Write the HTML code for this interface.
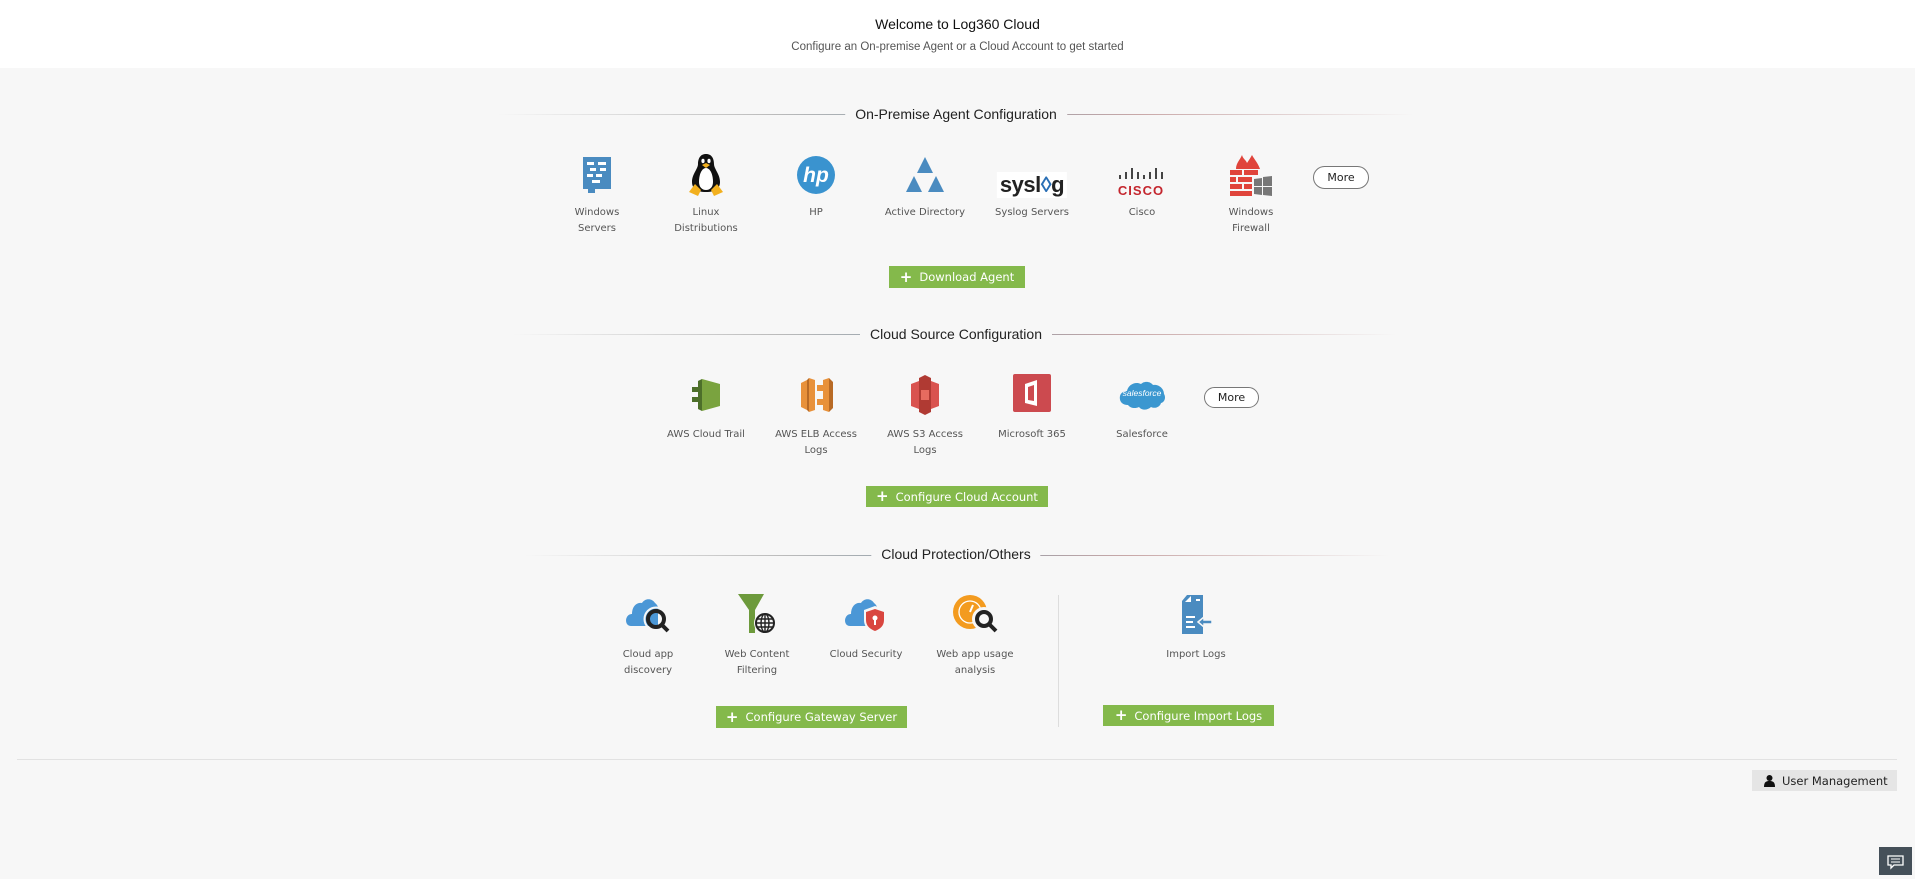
<!DOCTYPE html>
<html><head><meta charset="utf-8"><style>
*{margin:0;padding:0;box-sizing:border-box}
body{width:1915px;height:875px;background:#f7f7f7;position:relative;overflow:hidden;font-family:"DejaVu Sans","Liberation Sans",sans-serif;color:#444}
.hdr{position:absolute;left:0;top:0;width:1915px;height:68px;background:#fff}
.t{position:absolute;left:0;width:1915px;text-align:center;font-family:"Liberation Sans",sans-serif}
.sec{position:absolute;height:1px;background:linear-gradient(90deg,rgba(200,200,200,0),#bbb 30%,#8a9aa6 50%,#c9a8a8 70%,rgba(200,200,200,0))}
.st{position:absolute;font-family:"Liberation Sans",sans-serif;font-size:14px;color:#222;background:#f7f7f7;padding:0 10px;transform:translateX(-50%);white-space:nowrap}
.it{position:absolute;width:120px;margin-left:-60px;text-align:center}
.ic{position:absolute;left:50%;transform:translate(-50%,-50%)}
.lb{position:absolute;left:0;width:120px;font-size:10px;line-height:16px;color:#555;text-align:center}
.btn{position:absolute;background:#84b94b;color:#fff;font-size:11.5px;display:flex;align-items:center;justify-content:center;gap:7px}
.btn b{font-size:15px;font-weight:bold;line-height:1}
.more{position:absolute;border:1.5px solid #777;border-radius:12px;font-size:11px;color:#222;display:flex;align-items:center;justify-content:center;background:#fff}
</style></head><body>
<div class="hdr"></div>
<div class="t" style="top:16px;font-size:14px;color:#111">Welcome to Log360 Cloud</div>
<div class="t" style="top:41px;font-size:11.5px;color:#555">Configure an On-premise Agent or a Cloud Account to get started</div>

<!-- section 1 -->
<div class="sec" style="left:498px;width:916px;top:114px"></div>
<div class="st" style="left:956px;top:106px">On-Premise Agent Configuration</div>

<div class="it" style="left:597px;top:175px">
<svg class="ic" width="34" height="40" viewBox="0 0 34 40"><path d="M3 2h28v32H15v4H8v-4H3z" fill="#4a8bc0"/><g fill="#fff"><rect x="7" y="7" width="7" height="3"/><rect x="18" y="7" width="8" height="3"/><rect x="10" y="13" width="6" height="3"/><rect x="20" y="13" width="6" height="3"/><rect x="7" y="19" width="6" height="3"/><rect x="16" y="19" width="6" height="3"/><rect x="12" y="25" width="8" height="3"/></g></svg>
<div class="lb" style="top:30px">Windows<br>Servers</div></div>

<div class="it" style="left:706px;top:175px">
<svg class="ic" width="38" height="46" viewBox="0 0 38 46"><path d="M19 2c-6 0-8 5-8 10 0 5-6 10-6 18 0 6 4 10 14 10s14-4 14-10c0-8-6-13-6-18 0-5-2-10-8-10z" fill="#111"/><path d="M19 16c-4 0-7 6-7 14 0 5 3 8 7 8s7-3 7-8c0-8-3-14-7-14z" fill="#fff"/><ellipse cx="16" cy="9" rx="1.6" ry="2.2" fill="#fff"/><ellipse cx="22" cy="9" rx="1.6" ry="2.2" fill="#fff"/><path d="M15 13l4-2 4 2-4 3z" fill="#f2b01e"/><path d="M2 40l6-8 6 6-3 6z M36 40l-6-8-6 6 3 6z" fill="#f2b01e"/></svg>
<div class="lb" style="top:30px">Linux<br>Distributions</div></div>

<div class="it" style="left:816px;top:175px">
<svg class="ic" width="40" height="40" viewBox="0 0 40 40"><circle cx="20" cy="20" r="19" fill="#3a93cf"/><text x="20" y="27" text-anchor="middle" font-family="Liberation Sans" font-style="italic" font-weight="bold" font-size="21" fill="#fff">hp</text></svg>
<div class="lb" style="top:30px">HP</div></div>

<div class="it" style="left:925px;top:175px">
<svg class="ic" width="42" height="38" viewBox="0 0 42 38"><path d="M21 1l8 16H13z M10 20l8 16H2z M32 20l8 16H24z" fill="#4a8bc0"/></svg>
<div class="lb" style="top:30px">Active Directory</div></div>

<div class="it" style="left:1032px;top:185px">
<div class="ic" style="background:#fff;padding:1px 3px;font-family:'Liberation Sans';font-weight:bold;font-size:22px;color:#222;letter-spacing:-0.5px;line-height:24px">sysl<span style="color:#2a6fb5">◊</span>g</div>
<div class="lb" style="top:20px">Syslog Servers</div></div>

<div class="it" style="left:1142px;top:180px">
<svg class="ic" width="52" height="34" viewBox="0 0 52 34"><g stroke="#444" stroke-width="2"><path d="M4 12v4M10 9v7M16 5v11M22 9v7M28 12v4M34 9v7M40 5v11M46 9v7"/></g><text x="25" y="32" text-anchor="middle" font-family="Liberation Sans" font-weight="bold" font-size="13" fill="#c4262e" letter-spacing="1">CISCO</text></svg>
<div class="lb" style="top:25px">Cisco</div></div>

<div class="it" style="left:1251px;top:175px">
<svg class="ic" width="46" height="44" viewBox="0 0 46 44"><path d="M8 16c0-6 4-9 6-14 1 4 4 5 5 8 2-3 4-6 5-8 2 4 6 8 8 14z" fill="#e0443b"/><g fill="#e0443b"><rect x="2" y="17" width="12" height="5"/><rect x="16" y="17" width="14" height="5"/><rect x="2" y="24" width="6" height="5"/><rect x="10" y="24" width="14" height="5"/><rect x="2" y="31" width="12" height="5"/><rect x="16" y="31" width="8" height="5"/><rect x="2" y="38" width="22" height="5"/></g><g fill="#777"><path d="M26 26l8-1v8h-8z M35 24l9-1v10h-9z M26 34h8v8l-8-1z M35 34h9v9l-9-1z"/></g></svg>
<div class="lb" style="top:30px">Windows<br>Firewall</div></div>

<div class="more" style="left:1313px;top:166px;width:56px;height:23px">More</div>
<div class="btn" style="left:889px;top:266px;width:136px;height:22px"><b>+</b>Download Agent</div>

<!-- section 2 -->
<div class="sec" style="left:513px;width:883px;top:334px"></div>
<div class="st" style="left:956px;top:326px">Cloud Source Configuration</div>

<div class="it" style="left:706px;top:395px">
<svg class="ic" width="32" height="38" viewBox="0 0 32 38"><path d="M12 3l18 5v22l-18 5z" fill="#7aa33f"/><path d="M12 3v32l-4-2V5z" fill="#4d6f2a"/><path d="M2 11h6v5H2zM2 21h6v5H2z" fill="#4d6f2a"/></svg>
<div class="lb" style="top:32px">AWS Cloud Trail</div></div>

<div class="it" style="left:816px;top:395px">
<svg class="ic" width="38" height="40" viewBox="0 0 38 40"><path d="M4 8l6-3v30l-6-3z M12 3l6 2v30l-6 2z M26 5l6-2v34l-6-2z M20 10h14v6H20zM20 24h14v6H20z" fill="#e8913a"/><path d="M10 5l2-2v34l-2-2z M32 3l4 4v26l-4 4z" fill="#b86a25"/></svg>
<div class="lb" style="top:32px">AWS ELB Access<br>Logs</div></div>

<div class="it" style="left:925px;top:395px">
<svg class="ic" width="36" height="42" viewBox="0 0 36 42"><path d="M4 10l8-3v28l-8-3z M32 10l-8-3v28l8-3z" fill="#d9534f"/><path d="M12 4l6-3 6 3v34l-6 3-6-3z" fill="#b03a33"/><rect x="14" y="16" width="8" height="10" fill="#e76b5f"/></svg>
<div class="lb" style="top:32px">AWS S3 Access<br>Logs</div></div>

<div class="it" style="left:1032px;top:393px">
<svg class="ic" width="38" height="38" viewBox="0 0 38 38"><rect width="38" height="38" rx="2" fill="#cc4a4f"/><path d="M12 10l12-4v26l-12-3z" fill="#fff"/><path d="M15 13l6-2v16l-6-1z" fill="#cc4a4f"/></svg>
<div class="lb" style="top:34px">Microsoft 365</div></div>

<div class="it" style="left:1142px;top:393px">
<svg class="ic" width="48" height="36" viewBox="0 0 48 36"><path d="M10 30c-6 0-9-4-8-9 1-4 5-5 7-5 1-6 8-10 14-7 3-3 9-3 12 1 5-1 11 3 11 9 2 3 1 8-3 9-1 4-6 6-10 4-3 3-9 4-12 0-4 2-9 1-11-2z" fill="#3b97d0"/><text x="24" y="21" text-anchor="middle" font-family="Liberation Sans" font-style="italic" font-size="8.5" fill="#fff">salesforce</text></svg>
<div class="lb" style="top:34px">Salesforce</div></div>

<div class="more" style="left:1204px;top:387px;width:55px;height:21px">More</div>
<div class="btn" style="left:866px;top:486px;width:182px;height:21px"><b>+</b>Configure Cloud Account</div>

<!-- section 3 -->
<div class="sec" style="left:525px;width:864px;top:555px"></div>
<div class="st" style="left:956px;top:546px">Cloud Protection/Others</div>

<div class="it" style="left:648px;top:614px">
<svg class="ic" width="46" height="40" viewBox="0 0 46 40"><path d="M6 32c-5 0-6-6-4-9 1-2 3-3 5-3 0-8 5-12 10-11 3-5 10-5 13 0 3 2 4 6 3 9v14z" fill="#4b97d6"/><circle cx="31" cy="25" r="8" fill="none" stroke="#222" stroke-width="4"/><circle cx="31" cy="25" r="11.5" fill="none" stroke="#f7f7f7" stroke-width="2"/><path d="M36 30l7 7" stroke="#222" stroke-width="4"/></svg>
<div class="lb" style="top:33px">Cloud app<br>discovery</div></div>

<div class="it" style="left:757px;top:614px">
<svg class="ic" width="42" height="42" viewBox="0 0 42 42"><path d="M2 1h26l-9 16v23h-6V17z" fill="#6d9a3c"/><circle cx="29" cy="30" r="11" fill="#f7f7f7"/><circle cx="29" cy="30" r="9" fill="none" stroke="#222" stroke-width="2"/><g stroke="#222" stroke-width="1.4" fill="none"><ellipse cx="29" cy="30" rx="4" ry="9"/><path d="M29 21v18M20 30h18M21 26h16M21 34h16"/></g></svg>
<div class="lb" style="top:33px">Web Content<br>Filtering</div></div>

<div class="it" style="left:866px;top:614px">
<svg class="ic" width="44" height="40" viewBox="0 0 44 40"><path d="M6 32c-5 0-6-6-4-9 1-2 3-3 5-3 0-8 5-12 10-11 3-5 10-5 13 0 3 2 4 6 3 9v14z" fill="#4b97d6"/><path d="M31 12l11 4v10c0 7-5 11-11 13-6-2-11-6-11-13V16z" fill="#f7f7f7"/><path d="M31 15l9 3v8c0 6-4 9-9 11-5-2-9-5-9-11v-8z" fill="#d9463f"/><circle cx="31" cy="24" r="2.5" fill="#fff"/><rect x="30" y="25" width="2" height="6" fill="#fff"/></svg>
<div class="lb" style="top:33px">Cloud Security</div></div>

<div class="it" style="left:975px;top:614px">
<svg class="ic" width="46" height="42" viewBox="0 0 46 42"><circle cx="18" cy="19" r="17" fill="#f39b1f"/><circle cx="18" cy="19" r="11" fill="none" stroke="#fff" stroke-width="1.3"/><path d="M18 19l3-7" stroke="#fff" stroke-width="2"/><circle cx="32" cy="26" r="12" fill="#f7f7f7"/><circle cx="32" cy="26" r="7" fill="none" stroke="#222" stroke-width="4"/><path d="M37 31l7 7" stroke="#222" stroke-width="4"/></svg>
<div class="lb" style="top:33px">Web app usage<br>analysis</div></div>

<div style="position:absolute;left:1058px;top:595px;width:1px;height:132px;background:#ddd"></div>

<div class="it" style="left:1196px;top:614px">
<svg class="ic" width="34" height="40" viewBox="0 0 34 40"><path d="M8 1h16v39H3V7z" fill="#4a8bc0"/><path d="M6 8l6-6v6z" fill="#fff"/><g fill="#fff"><rect x="17" y="5" width="4" height="2"/><rect x="7" y="22" width="9" height="2"/><rect x="7" y="27" width="7" height="2"/><rect x="7" y="32" width="9" height="2"/></g><path d="M19 28l6-5v3h8v4h-8v3z" fill="#4a8bc0" stroke="#f7f7f7" stroke-width="1.5"/></svg>
<div class="lb" style="top:33px">Import Logs</div></div>

<div class="btn" style="left:716px;top:706px;width:191px;height:22px"><b>+</b>Configure Gateway Server</div>
<div class="btn" style="left:1103px;top:705px;width:171px;height:21px"><b>+</b>Configure Import Logs</div>

<div style="position:absolute;left:17px;top:759px;width:1880px;height:1px;background:#e2e2e2"></div>
<div style="position:absolute;left:1752px;top:770px;width:145px;height:21px;background:#e5e5e5;font-size:11.5px;color:#222;display:flex;align-items:center;padding-left:12px;gap:7px">
<svg width="11" height="12" viewBox="0 0 11 12"><circle cx="5.5" cy="3" r="3" fill="#111"/><path d="M0 12c0-5 2-6 5.5-6S11 7 11 12z" fill="#111"/></svg>User Management</div>
<div style="position:absolute;left:1879px;top:847px;width:33px;height:28px;background:#455059">
<svg width="33" height="28" viewBox="0 0 33 28"><path d="M9 9h15v9h-9l-3 3v-3H9z" fill="none" stroke="#fff" stroke-width="1.3"/><path d="M12 12h9M12 15h9" stroke="#fff" stroke-width="1"/></svg></div>
</body></html>
